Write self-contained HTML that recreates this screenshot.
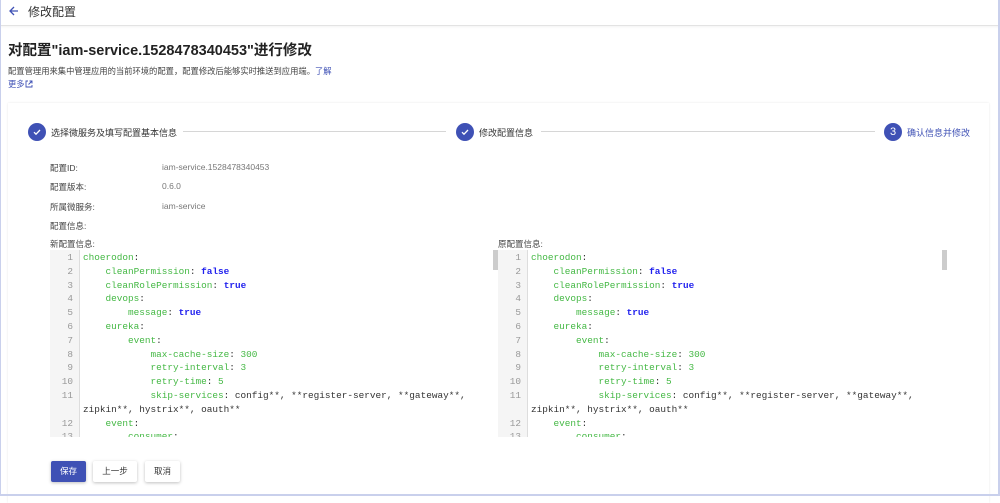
<!DOCTYPE html>
<html><head><meta charset="utf-8"><style>
*{margin:0;padding:0;box-sizing:border-box}
body{width:1000px;height:496px;overflow:hidden;background:#fff;font-family:"Liberation Sans","Noto Sans CJK SC",sans-serif;color:#333;position:relative}
.frame{position:absolute;left:0;top:0;width:1000px;height:496px;border:1px solid #c9d0ec;border-top:none;border-right:2px solid #c9d0ec;border-bottom:2px solid #c9d0ec}
.hdr{position:absolute;left:0;top:0;width:1000px;height:26px;border-bottom:1px solid #e3e3e3;box-shadow:0 1px 2px rgba(0,0,0,.05)}
.abs{position:absolute;white-space:nowrap}
.card{position:absolute;left:8px;top:103px;width:981px;height:400px;box-shadow:0 0 2px rgba(0,0,0,.1);background:#fff}
.circ{position:absolute;width:18px;height:18px;border-radius:50%;background:#3f51b5;color:#fff;font-size:11px;text-align:center;line-height:18px}
.circ svg{position:absolute;left:4px;top:4px}
.line{position:absolute;height:1px;background:#d6d6d6;top:131px}
.lbl{font-size:8.5px;color:#444}
.val{font-size:8.5px;color:#777}
.ed{position:absolute;top:250px;height:187px;overflow:hidden;font-family:"Liberation Mono",monospace;font-size:9.4px;line-height:13.8px}
.gut{position:absolute;left:0;top:0;width:30px;height:187px;background:#f5f5f5;border-right:1px solid #ddd;color:#999;text-align:right;padding-right:6px;padding-top:1px}
.code{position:absolute;left:33px;top:1px;white-space:pre;color:#333}
.k{color:#44b844}.b{color:#2222ee;font-weight:bold}.n{color:#44b844}
.sb{position:absolute;top:250px;width:5px;height:20px;background:#ccc}
.btn{position:absolute;top:461px;height:21px;font-size:8.5px;text-align:center;line-height:21px;border-radius:2px;box-shadow:0 1px 3px rgba(0,0,0,.25);background:#fff;color:#333}
</style></head><body>
<div class="hdr"></div>
<svg class="abs" style="left:8px;top:5px" width="12" height="12" viewBox="0 0 12 12"><path d="M10 6H2M6 2L2 6l4 4" stroke="#3f51b5" stroke-width="1.3" fill="none"/></svg>
<div class="abs" style="left:28px;top:3px;font-size:12px;color:#333">修改配置</div>
<div class="abs" style="left:8px;top:39px;font-size:14.5px;font-weight:bold;color:#222">对配置"iam-service.1528478340453"进行修改</div>
<div class="abs" style="left:8px;top:65px;font-size:8.3px;color:#444">配置管理用来集中管理应用的当前环境的配置，配置修改后能够实时推送到应用端。<span style="color:#3f51b5">了解</span></div>
<div class="abs" style="left:8px;top:78px;font-size:8.3px;color:#3f51b5">更多<svg width="8" height="8" viewBox="0 0 8 8" style="vertical-align:-1px"><path d="M3 1H1v6h6V5M4.5 1H7v2.5M7 1L3.5 4.5" stroke="#3f51b5" fill="none" stroke-width="0.9"/></svg></div>
<div class="card"></div>
<div class="circ" style="left:28px;top:123px"><svg width="10" height="10" viewBox="0 0 10 10"><path d="M2 5.2l2 2 4-4.2" stroke="#fff" stroke-width="1.3" fill="none"/></svg></div>
<div class="abs" style="left:51px;top:126px;font-size:9px;color:#333">选择微服务及填写配置基本信息</div>
<div class="line" style="left:183px;width:263px"></div>
<div class="circ" style="left:456px;top:123px"><svg width="10" height="10" viewBox="0 0 10 10"><path d="M2 5.2l2 2 4-4.2" stroke="#fff" stroke-width="1.3" fill="none"/></svg></div>
<div class="abs" style="left:479px;top:126px;font-size:9px;color:#333">修改配置信息</div>
<div class="line" style="left:541px;width:334px"></div>
<div class="circ" style="left:884px;top:123px">3</div>
<div class="abs" style="left:907px;top:126px;font-size:9px;color:#3f51b5">确认信息并修改</div>
<div class="abs lbl" style="left:50px;top:162px">配置ID:</div><div class="abs val" style="left:162px;top:162px">iam-service.1528478340453</div>
<div class="abs lbl" style="left:50px;top:181px">配置版本:</div><div class="abs val" style="left:162px;top:181px">0.6.0</div>
<div class="abs lbl" style="left:50px;top:201px">所属微服务:</div><div class="abs val" style="left:162px;top:201px">iam-service</div>
<div class="abs lbl" style="left:50px;top:220px">配置信息:</div>
<div class="abs lbl" style="left:50px;top:238px">新配置信息:</div>
<div class="abs lbl" style="left:498px;top:238px">原配置信息:</div>

<div class="ed" style="left:50px;width:440px"><div class="gut">1<br>2<br>3<br>4<br>5<br>6<br>7<br>8<br>9<br>10<br>11<br><br>12<br>13</div><div class="code"><span class="k">choerodon</span>:
    <span class="k">cleanPermission</span>: <span class="b">false</span>
    <span class="k">cleanRolePermission</span>: <span class="b">true</span>
    <span class="k">devops</span>:
        <span class="k">message</span>: <span class="b">true</span>
    <span class="k">eureka</span>:
        <span class="k">event</span>:
            <span class="k">max-cache-size</span>: <span class="n">300</span>
            <span class="k">retry-interval</span>: <span class="n">3</span>
            <span class="k">retry-time</span>: <span class="n">5</span>
            <span class="k">skip-services</span>: config**, **register-server, **gateway**,
zipkin**, hystrix**, oauth**
    <span class="k">event</span>:
        <span class="k">consumer</span>:</div></div>
<div class="sb" style="left:493px"></div>

<div class="ed" style="left:498px;width:440px"><div class="gut">1<br>2<br>3<br>4<br>5<br>6<br>7<br>8<br>9<br>10<br>11<br><br>12<br>13</div><div class="code"><span class="k">choerodon</span>:
    <span class="k">cleanPermission</span>: <span class="b">false</span>
    <span class="k">cleanRolePermission</span>: <span class="b">true</span>
    <span class="k">devops</span>:
        <span class="k">message</span>: <span class="b">true</span>
    <span class="k">eureka</span>:
        <span class="k">event</span>:
            <span class="k">max-cache-size</span>: <span class="n">300</span>
            <span class="k">retry-interval</span>: <span class="n">3</span>
            <span class="k">retry-time</span>: <span class="n">5</span>
            <span class="k">skip-services</span>: config**, **register-server, **gateway**,
zipkin**, hystrix**, oauth**
    <span class="k">event</span>:
        <span class="k">consumer</span>:</div></div>
<div class="sb" style="left:942px"></div>

<div class="btn" style="left:51px;width:35px;background:#3f51b5;color:#fff">保存</div>
<div class="btn" style="left:93px;width:44px">上一步</div>
<div class="btn" style="left:145px;width:35px">取消</div>
<div class="frame"></div>
</body></html>
